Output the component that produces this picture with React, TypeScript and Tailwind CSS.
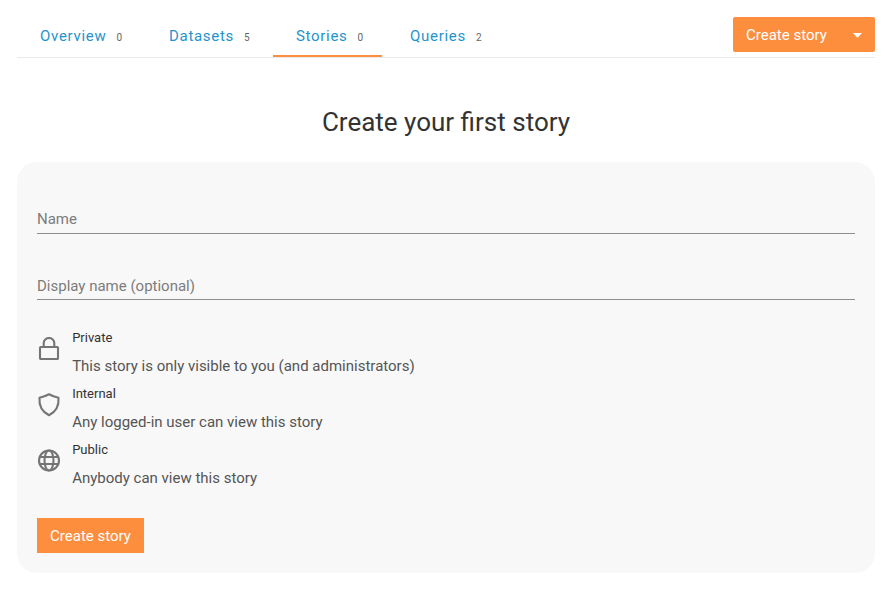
import React from "react";

const tabs = [
  { name: "Overview", count: 0, cls: "w-[129px]" },
  { name: "Datasets", count: 5, cls: "w-[127px]" },
  { name: "Stories", count: 0, cls: "w-[109px] border-b-2 border-[#fc8e3e] mr-[5px]" },
  { name: "Queries", count: 2, cls: "w-[118px]" },
];

const options = [
  { title: "Private", text: "This story is only visible to you (and administrators)", icon: "lock" },
  { title: "Internal", text: "Any logged-in user can view this story", icon: "shield" },
  { title: "Public", text: "Anybody can view this story", icon: "globe" },
];

function Icon({ name }: { name: string }) {
  return (
    <svg width="24" height="24" viewBox="0 0 24 24" fill="none" stroke="#757575" strokeWidth="2.1" className="block">
      {name === "lock" && (
        <>
          <rect x="3" y="10" width="18" height="12" rx="0.8" />
          <path d="M6.700 10V6.300a5.300 5.300 0 0 1 10.600 0V10" />
        </>
      )}
      {name === "shield" && (
        <path d="M12 1.300C9.200 2.800 6 4 2.500 4.800C1.900 12 4.800 18.500 12 22.200C19.200 18.500 22.100 12 21.500 4.800C18 4 14.800 2.800 12 1.300Z" strokeLinejoin="round" />
      )}
      {name === "globe" && (
        <>
          <circle cx="12" cy="11.500" r="10" />
          <ellipse cx="12" cy="11.500" rx="4.500" ry="10" />
          <path d="M3 8h18M3 15h18" />
        </>
      )}
    </svg>
  );
}

export default function App() {
  return (
    <main className="h-[606px] bg-white pl-[17px] pt-[17px] pr-[18px] font-[Roboto,sans-serif] text-[15px] text-[#555]">
      <header className="flex h-[41px] justify-between border-b border-[#eaeaea]">
        <nav className="flex">
          {tabs.map((t) => (
            <a key={t.name} className={`flex h-10 items-baseline pl-[23px] pt-[7px] leading-[24px] tracking-[0.7px] text-[#1f93cc] ${t.cls}`}>
              {t.name}
              <span className="ml-[10px] text-[10px] tracking-normal text-[#666]">{t.count}</span>
            </a>
          ))}
        </nav>
        <button className="flex h-[35px] w-[142px] items-center justify-between rounded-[2px] bg-[#fc8e3e] px-[13px] text-white">
          <span className="pt-px">Create story</span>
          <svg width="9" height="5" viewBox="0 0 9 5" className="mt-px"><path d="M0 0h9L4.500 5z" fill="#fff" /></svg>
        </button>
      </header>
      <h1 className="mt-[46px] text-center text-[26px] leading-[36px] text-[#333]">Create your first story</h1>
      <section className="mt-[22px] h-[411px] rounded-[20px] bg-[#f8f8f8] px-5 pt-[45px]">
        <div className="h-[27px] border-b border-[#8e8e8e] leading-[24px] text-[#7c7c7c]">Name</div>
        <div className="mt-10 h-[26px] border-b border-[#8e8e8e] leading-[24px] text-[#7c7c7c]">Display name (optional)</div>
        <div className="mt-[28px]">
          {options.map((o) => (
            <div key={o.title} className="flex h-14 gap-[11.15px]">
              <div className="pt-[9px]"><Icon name={o.icon} /></div>
              <div>
                <div className="text-[13px] leading-5 text-[#333]">{o.title}</div>
                <div className="mt-[6px] leading-6">{o.text}</div>
              </div>
            </div>
          ))}
        </div>
        <button className="mt-[22px] h-[35px] w-[107px] bg-[#fc8e3e] pt-[2px] text-white">Create story</button>
      </section>
    </main>
  );
}
